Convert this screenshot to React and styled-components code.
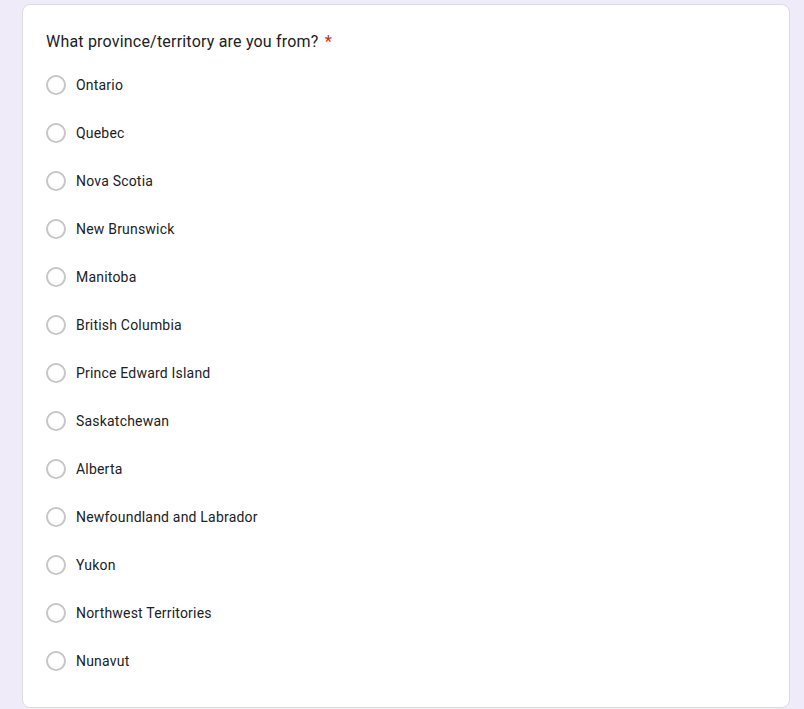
import React, { useState } from 'react'
import styled, { createGlobalStyle } from 'styled-components';

const GlobalStyle = createGlobalStyle`
    html, body {
        margin: 0;
        padding: 0;
        background-color: #f0ebf8;
        font-family: Roboto, "Liberation Sans", Arial, sans-serif;
    }
`;

const Page = styled.div`
    padding: 4px 14px 0 22px;
    min-height: 709px;
    box-sizing: border-box;
`;

const Card = styled.div`
    background-color: #fff;
    border: 1px solid #dadce0;
    border-radius: 8px;
    padding: 25px 23px 22px 23px;
    min-height: 704px;
    box-sizing: border-box;
`;

const Title = styled.div`
    font-size: 16px;
    line-height: 24px;
    color: #202124;
    letter-spacing: 0.2px;
`;

const Required = styled.span`
    color: #d93025;
    margin-left: 6px;
    font-weight: 500;
`;

const List = styled.div`
    display: flex;
    flex-direction: column;
    margin-top: 7px;
`;

const Option = styled.label`
    display: flex;
    flex-direction: row;
    align-items: center;
    height: 48px;
    gap: 10px;
    cursor: pointer;
`;

const Circle = styled.span`
    width: 20px;
    height: 20px;
    border-radius: 50%;
    border: 2px solid ${(props) => (props.checked ? '#673ab7' : '#c6c6c6')};
    box-sizing: border-box;
    display: flex;
    align-items: center;
    justify-content: center;
    flex-shrink: 0;
`;

const Dot = styled.span`
    width: 10px;
    height: 10px;
    border-radius: 50%;
    background-color: #673ab7;
`;

const Label = styled.span`
    font-size: 14px;
    color: #202124;
    letter-spacing: 0.2px;
`;

const provinces = [
    'Ontario',
    'Quebec',
    'Nova Scotia',
    'New Brunswick',
    'Manitoba',
    'British Columbia',
    'Prince Edward Island',
    'Saskatchewan',
    'Alberta',
    'Newfoundland and Labrador',
    'Yukon',
    'Northwest Territories',
    'Nunavut',
];

const App = () => {
    const [selected, setSelected] = useState(null);

    return (
        <Page>
            <GlobalStyle />
            <Card>
                <Title>
                    What province/territory are you from?<Required>*</Required>
                </Title>
                <List>
                    {provinces.map((p) => (
                        <Option key={p} onClick={() => setSelected(p)}>
                            <Circle checked={selected === p}>
                                {selected === p ? <Dot /> : null}
                            </Circle>
                            <Label>{p}</Label>
                        </Option>
                    ))}
                </List>
            </Card>
        </Page>
    )
}

export default App
